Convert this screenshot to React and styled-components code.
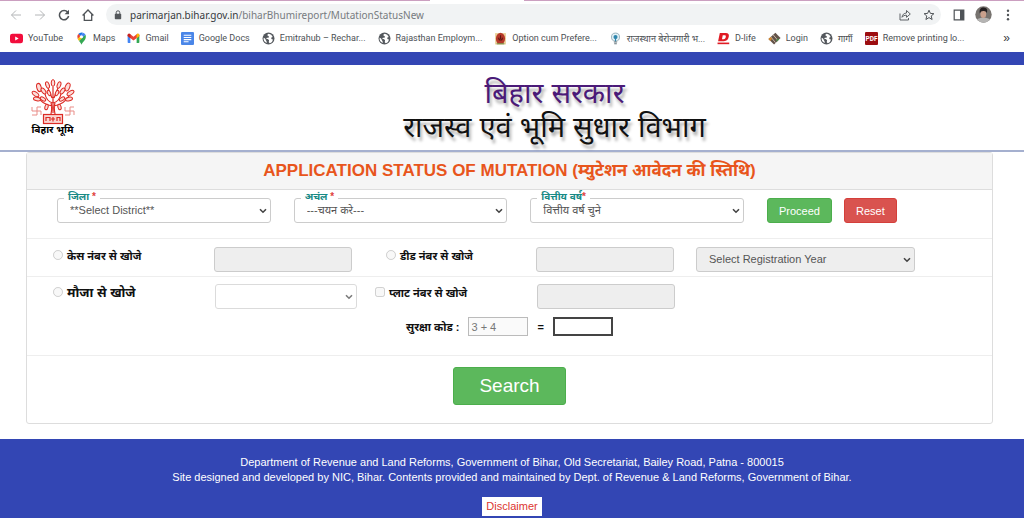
import React, { useState } from "react";
import styled, { createGlobalStyle } from "styled-components";

const GlobalStyle = createGlobalStyle`
  * {
    box-sizing: border-box;
  }

  body {
    margin: 0;
    background: #fff;
    font-family: "Liberation Sans", "Noto Sans", sans-serif;
    font-size: 11px;
    color: #333;
  }
`;

const YouTubeIcon = () => (
  <Icon viewBox="0 0 12 12">
    <rect x="0" y="1.6" width="12" height="8.8" rx="2.2" fill="#f20d3c" />
    <path d="M4.8 4.1 8 6 4.8 7.9z" fill="#fff" />
  </Icon>
);

const MapsIcon = () => (
  <Icon viewBox="0 0 12 12">
    <path d="M6 .4a4 4 0 0 0-3 1.4l2.2 1.9L7.4 .7A4 4 0 0 0 6 .4z" fill="#1a73e8" />
    <path d="M3 1.8a4 4 0 0 0-.5 4.6l2.7-2.7z" fill="#ea4335" />
    <path d="M7.4 .7 4.8 3.6 7 5.6l2.7-3A4 4 0 0 0 7.4 .7z" fill="#4285f4" />
    <path d="M2.5 6.4 5 3.7a1.4 1.4 0 0 0 2 1.8L3.7 8.3z" fill="#fbbc04" />
    <path d="M9.7 2.6 3.7 8.3C5 9.7 5.5 10.5 6 11.8c.6-2.5 4-4 4-7.5a4 4 0 0 0-.3-1.7z" fill="#34a853" />
    <circle cx="6" cy="4.4" r="1.4" fill="#fff" />
  </Icon>
);

const GmailIcon = () => (
  <Icon viewBox="0 0 12 12">
    <path d="M.6 3v6.5c0 .4.3.7.7.7h1.8V5.2z" fill="#4285f4" />
    <path d="M11.4 3v6.5c0 .4-.3.7-.7.7H8.9V5.2z" fill="#34a853" />
    <path d="M.6 3c0-1.3 1.3-1.7 2.2-1.1L6 4.3l3.2-2.4c.9-.6 2.2-.2 2.2 1.1v.8L6 7.8.6 3.8z" fill="#ea4335" />
    <path d="M8.9 2.1c1-.8 2.5-.3 2.5.9v.8L8.9 5.7z" fill="#fbbc04" />
    <path d="M.6 3c0-1.2 1.5-1.7 2.5-.9v3.6L.6 3.8z" fill="#c5221f" />
  </Icon>
);

const DocsIcon = () => (
  <Icon viewBox="0 0 12 12">
    <rect width="12" height="12" rx="1" fill="#4a86e8" />
    <path d="M2.5 3h7M2.5 5h7M2.5 7h7M2.5 9H7" stroke="#fff" strokeWidth="1" />
  </Icon>
);

const GlobeIcon = () => (
  <Icon viewBox="0 0 12 12">
    <circle cx="6" cy="6" r="5.5" fill="#54585d" />
    <path d="M6.3 1.7c-.8.5-1.5.7-1.4 1.4.1.8 1 .4 1.4 1 .3.6-.3 1.2-1.2 1.3-.8 0-1.2.2-1 .9.3.8 1.9.2 2.3 1 .4.7-.3 1.2-.1 2.2.1.5.6.9 1.1.8a4.4 4.4 0 0 0 2.9-3.5c-.9.2-1.3-.3-1.7-.9-.5-.8.5-1.3 1.3-1.4a4.4 4.4 0 0 0-3.6-2.8z" fill="#fff" />
    <path d="M1.5 5.4c.9.3 1.7 1 1.9 1.7.2.7.9 1 .9 1.8v1.2A4.5 4.5 0 0 1 1.5 5.4z" fill="#fff" />
  </Icon>
);

const EmblemIcon = () => (
  <Icon viewBox="0 0 12 12">
    <rect x="1" y="1" width="10" height="10.5" fill="#ecd29b" />
    <path d="M6 .8c2.8.5 4.2 2.7 4.2 5.2 0 2.2-1 3.8-2 4.7H3.7C2.5 9.7 1.8 8.2 1.8 6 1.8 3.5 3.2 1.3 6 .8z" fill="#b5382a" />
    <path d="M6 3v3.5M4.3 5.2c.1 3 3.4 3 3.5 0" stroke="#5e1712" strokeWidth="1" fill="none" />
    <path d="M2.5 10.9h7" stroke="#6f8b42" strokeWidth="1" />
  </Icon>
);

const BulbIcon = () => (
  <Icon viewBox="0 0 12 12">
    <circle cx="6" cy="4.7" r="3.7" fill="#e3f1f6" stroke="#8da8b4" strokeWidth=".8" />
    <circle cx="6" cy="4.7" r="1.9" fill="#2f86ad" />
    <path d="M6 5.5v3.3" stroke="#2f86ad" strokeWidth="1" />
    <path d="M4.5 9.2h3M4.8 10.8h2.4" stroke="#65757c" strokeWidth="1" />
  </Icon>
);

const DLifeIcon = () => (
  <Icon viewBox="0 0 12 12">
    <path fillRule="evenodd" d="M2.6 1h5.6c2.2 0 3.1 1.2 2.7 3.2-.5 2.7-1.9 4.3-4.5 4.3H1zm2.7 1.9-.7 3.7h1.6c1.1 0 1.6-.6 1.9-1.9.2-1.2-.1-1.8-1.1-1.8z" fill="#e01b24" />
    <path d="M.5 10.5h10.8" stroke="#e01b24" strokeWidth="1.5" />
  </Icon>
);

const LoginIcon = () => (
  <Icon viewBox="0 0 12 12">
    <path d="M.4 6.5 6.8 .6l4.8 4.9-6 6z" fill="#635349" />
    <path d="M2.5 4.5 7 9.9M4.7 2.5l4.4 5.2" stroke="#d8c9b5" strokeWidth=".8" />
    <path d="M.4 6.5 2.5 4.5l1.4 1.7-1.8 2z" fill="#d4872d" />
    <path d="m7.5 7.5 1.7-1.7 1 1.2-2 2z" fill="#4d8a4a" />
  </Icon>
);

const PdfIcon = () => (
  <Icon viewBox="0 0 12 12">
    <rect width="12" height="12" rx="1" fill="#9c0d10" />
    <text x="6" y="8.2" textAnchor="middle" fontSize="6" fontWeight="700" fill="#fff">
      PDF
    </text>
  </Icon>
);

const BiharTree = () => (
  <svg width="44" height="46" viewBox="0 0 44 46" fill="none" stroke="#dc2a24" strokeWidth="1.2">
    <path d="M20 35c1-5 1-8 0-11M24 35c-1-5-1-8 0-11M22 34V8M22 24c-4-1-7-4-8-9M22 24c4-1 7-4 8-9M21 27C14 26 9 22 6 17M23 27c7-1 12-5 15-10M21 19l-4-10M23 19l4-10" />
    <g strokeWidth="1" fill="#fbdcd8">
      <ellipse cx="22" cy="4" rx="1.8" ry="3.4" />
      <ellipse cx="16.5" cy="6" rx="1.7" ry="3.3" transform="rotate(-20 16.5 6)" />
      <ellipse cx="28" cy="6" rx="1.7" ry="3.3" transform="rotate(20 28 6)" />
      <ellipse cx="8" cy="8.5" rx="2.2" ry="4.2" transform="rotate(-15 8 8.5)" />
      <ellipse cx="36.5" cy="8" rx="2.2" ry="4.2" transform="rotate(22 36.5 8)" />
      <ellipse cx="12.5" cy="12" rx="1.8" ry="3.4" transform="rotate(-35 12.5 12)" />
      <ellipse cx="31.5" cy="12" rx="1.8" ry="3.4" transform="rotate(35 31.5 12)" />
      <ellipse cx="4.5" cy="15" rx="1.9" ry="3.8" transform="rotate(-55 4.5 15)" />
      <ellipse cx="39.5" cy="14" rx="1.9" ry="3.8" transform="rotate(60 39.5 14)" />
      <ellipse cx="6" cy="20" rx="1.8" ry="3.6" transform="rotate(-80 6 20)" />
      <ellipse cx="38" cy="20" rx="1.8" ry="3.6" transform="rotate(75 38 20)" />
      <ellipse cx="12" cy="20" rx="1.6" ry="3" transform="rotate(-60 12 20)" />
      <ellipse cx="31" cy="20" rx="1.6" ry="3" transform="rotate(60 31 20)" />
      <ellipse cx="18" cy="14" rx="1.5" ry="2.8" transform="rotate(-25 18 14)" />
      <ellipse cx="26" cy="14" rx="1.5" ry="2.8" transform="rotate(25 26 14)" />
      <ellipse cx="15.5" cy="28" rx="1.6" ry="2.8" transform="rotate(15 15.5 28)" />
      <ellipse cx="28.5" cy="28" rx="1.6" ry="2.8" transform="rotate(-15 28.5 28)" />
    </g>
    <g stroke="#e98d88" strokeWidth="1">
      <path d="M1 28v4h9v4M10 28H6v8H1M34 28v4h9v4M43 28h-4v8h-5" />
    </g>
    <rect x="12.5" y="35.5" width="19" height="9" fill="#f9d5d1" />
    <path d="M15 42v-3.5h4V42m3-4v4.5m-2-2.5h4m2 2v-3.5h3V42" />
  </svg>
);

const bookmarks = [
  { label: "YouTube", icon: YouTubeIcon },
  { label: "Maps", icon: MapsIcon },
  { label: "Gmail", icon: GmailIcon },
  { label: "Google Docs", icon: DocsIcon },
  { label: "Emitrahub – Rechar...", icon: GlobeIcon },
  { label: "Rajasthan Employm...", icon: GlobeIcon },
  { label: "Option cum Prefere...", icon: EmblemIcon },
  { label: "राजस्थान बेरोजगारी भ...", icon: BulbIcon },
  { label: "D-life", icon: DLifeIcon },
  { label: "Login", icon: LoginIcon },
  { label: "गार्गी", icon: GlobeIcon },
  { label: "Remove printing lo...", icon: PdfIcon },
];

function BrowserBar() {
  return (
    <Browser>
      <TabStrip>
        <ActiveTab />
      </TabStrip>
      <Toolbar>
        <NavButton type="button" aria-label="Back" $muted>
          <svg width="12" height="12" viewBox="0 0 12 12">
            <path d="M11 6H1.5M6 1.5 1.5 6 6 10.5" />
          </svg>
        </NavButton>
        <NavButton type="button" aria-label="Forward" $muted>
          <svg width="12" height="12" viewBox="0 0 12 12">
            <path d="M1 6h9.5M6 1.5 10.5 6 6 10.5" />
          </svg>
        </NavButton>
        <NavButton type="button" aria-label="Reload">
          <svg width="12" height="12" viewBox="0 0 12 12">
            <path d="M9.7 3.3A4.6 4.6 0 1 0 10.6 7" strokeWidth="1.5" />
            <path d="M11 .8v4.4H6.6z" fill="#4f5357" stroke="none" />
          </svg>
        </NavButton>
        <NavButton type="button" aria-label="Home">
          <svg width="12" height="12" viewBox="0 0 12 12">
            <path d="M.6 6.5 6 1l5.4 5.5M2.3 5.5v5.8h7.4V5.5" strokeWidth="1.3" />
          </svg>
        </NavButton>
        <AddressBar>
          <svg width="8" height="10" viewBox="0 0 8 10" fill="none">
            <rect x=".8" y="3.8" width="6.4" height="5.4" rx=".7" fill="#54585c" />
            <path d="M2.2 4V2.6a1.8 1.8 0 0 1 3.6 0V4" stroke="#54585c" strokeWidth="1" />
          </svg>
          <Url>
            <b>parimarjan.bihar.gov.in</b>/biharBhumireport/MutationStatusNew
          </Url>
          <ButtonGroup $gap={12}>
            <NavButton type="button" aria-label="Share">
              <svg width="12" height="12" viewBox="0 0 12 12">
                <path d="M1 4.5V11h8.5V9M3 8.3C3.3 5.5 5 4.2 7.5 4V1.5L11.3 5 7.5 8.3V6.2C5.5 6.2 4 6.8 3 8.3z" strokeWidth=".9" />
              </svg>
            </NavButton>
            <NavButton type="button" aria-label="Bookmark this page">
              <svg width="12" height="12" viewBox="0 0 12 12">
                <path d="m6 1.2 1.4 3.2 3.5.3-2.7 2.3.9 3.5L6 8.6l-3.1 1.9.9-3.5L1.1 4.7l3.5-.3z" strokeWidth="1" />
              </svg>
            </NavButton>
          </ButtonGroup>
        </AddressBar>
        <ButtonGroup $gap={10}>
          <NavButton type="button" aria-label="Side panel">
            <svg width="12" height="12" viewBox="0 0 12 12">
              <path d="M1.2 1.2h9.6v9.6H1.2z" strokeWidth="1.2" />
              <path d="M7 1h4v10H7z" fill="#4f5357" stroke="none" />
            </svg>
          </NavButton>
          <NavButton type="button" aria-label="Profile">
            <svg width="17" height="17" viewBox="0 0 17 17">
              <g stroke="none">
                <circle cx="8.5" cy="8.5" r="8.2" fill="#77736f" />
                <path d="M2 13.5c2-2.5 11-2.5 13 0a8.2 8.2 0 0 1-13 0z" fill="#b5b4b3" />
                <ellipse cx="8.3" cy="8" rx="2.9" ry="4" fill="#c9a08c" />
                <path d="M4.8 7.5C4 3.5 6 1.5 8.8 1.6c3 .1 4 2.4 3 5.4-.6-1.5-1.5-2.2-3.5-2-1.8 0-2.7.8-3.5 2.5z" fill="#231f20" />
              </g>
            </svg>
          </NavButton>
          <NavButton type="button" aria-label="Menu">
            <svg width="12" height="12" viewBox="0 0 12 12">
              <g fill="#4f5357" stroke="none">
                <circle cx="6" cy="1.8" r="1.2" />
                <circle cx="6" cy="6" r="1.2" />
                <circle cx="6" cy="10.2" r="1.2" />
              </g>
            </svg>
          </NavButton>
        </ButtonGroup>
      </Toolbar>
      <Bookmarks>
        {bookmarks.map(({ label, icon: BookmarkIcon }) => (
          <Bookmark key={label} href="#">
            <BookmarkIcon />
            {label}
          </Bookmark>
        ))}
        <MoreButton type="button" aria-label="More bookmarks">
          »
        </MoreButton>
      </Bookmarks>
    </Browser>
  );
}

function App() {
  const [mode, setMode] = useState("");
  const [code, setCode] = useState("");

  return (
    <>
      <GlobalStyle />
      <BrowserBar />
      <TopStripe />
      <Header>
        <Logo>
          <BiharTree />
          <LogoText>बिहार भूमि</LogoText>
        </Logo>
        <Titles>
          <Title $color="#4b1a78">बिहार सरकार</Title>
          <Title $color="#111">राजस्व एवं भूमि सुधार विभाग</Title>
        </Titles>
      </Header>

      <Panel>
        <PanelHeading>APPLICATION STATUS OF MUTATION (म्युटेशन आवेदन की स्तिथि)</PanelHeading>

        <FilterRow>
          <Field>
            <FieldLabel htmlFor="district">
              जिला <i>*</i>
            </FieldLabel>
            <Select id="district">
              <option>**Select District**</option>
            </Select>
          </Field>
          <Field>
            <FieldLabel htmlFor="circle">
              अचंल <i>*</i>
            </FieldLabel>
            <Select id="circle">
              <option>---चयन करे---</option>
            </Select>
          </Field>
          <Field>
            <FieldLabel htmlFor="year">
              वित्तीय वर्ष<i>*</i>
            </FieldLabel>
            <Select id="year">
              <option>वित्तीय वर्ष चुने</option>
            </Select>
          </Field>
          <Actions>
            <Button type="button" $color="#5cb85c" $border="#4cae4c">
              Proceed
            </Button>
            <Button type="button" $color="#d9534f" $border="#d43f3a">
              Reset
            </Button>
          </Actions>
        </FilterRow>

        <CaseRow>
          <Choice>
            <input
              type="radio"
              name="mode"
              checked={mode === "case"}
              onChange={() => setMode("case")}
              disabled
            />
            केस नंबर से खोजे
          </Choice>
          <TextBox aria-label="केस नंबर" disabled />
          <Choice>
            <input
              type="radio"
              name="mode"
              checked={mode === "deed"}
              onChange={() => setMode("deed")}
              disabled
            />
            डीड नंबर से खोजे
          </Choice>
          <TextBox aria-label="डीड नंबर" disabled />
          <Select aria-label="Registration Year" $grey disabled>
            <option>Select Registration Year</option>
          </Select>
        </CaseRow>

        <MaujaRow>
          <Choice $large>
            <input
              type="radio"
              name="mode"
              checked={mode === "mauja"}
              onChange={() => setMode("mauja")}
              disabled
            />
            मौजा से खोजे
          </Choice>
          <Select aria-label="मौजा" $faded disabled />
          <Choice>
            <input type="checkbox" disabled />
            प्लाट नंबर से खोजे
          </Choice>
          <TextBox aria-label="प्लाट नंबर" disabled />
        </MaujaRow>

        <CodeRow>
          <label htmlFor="code">सुरक्षा कोड :</label>
          <CodeBox aria-label="3 + 4" value="3 + 4" disabled />
          <span>=</span>
          <CodeBox id="code" value={code} onChange={(e) => setCode(e.target.value)} />
        </CodeRow>

        <SearchRow>
          <SearchButton type="button">Search</SearchButton>
        </SearchRow>
      </Panel>

      <Footer>
        <p>
          Department of Revenue and Land Reforms, Government of Bihar, Old Secretariat, Bailey Road,
          Patna - 800015
        </p>
        <p>
          Site designed and developed by NIC, Bihar. Contents provided and maintained by Dept. of
          Revenue &amp; Land Reforms, Government of Bihar.
        </p>
        <Disclaimer href="#">Disclaimer</Disclaimer>
      </Footer>
    </>
  );
}

const chevron = `url("data:image/svg+xml,%3Csvg xmlns='http://www.w3.org/2000/svg' width='8' height='6' viewBox='0 0 8 6'%3E%3Cpath d='M1 1.2 4 4.2 7 1.2' fill='none' stroke='%23444' stroke-width='1.6'/%3E%3C/svg%3E")`;

const Icon = styled.svg`
  width: 13px;
  height: 13px;
  flex: none;
`;

const Browser = styled.div`
  font-family: "Noto Sans", "Open Sans", sans-serif;
  color: #4c5054;
`;

const TabStrip = styled.div`
  display: flex;
  height: 1px;
  padding-left: 42%;
  background: #cb9fc0;
`;

const ActiveTab = styled.div`
  width: 94px;
  background: #fff;
`;

const Toolbar = styled.div`
  display: flex;
  align-items: center;
  gap: 12px;
  height: 27px;
  padding: 0 10px;
`;

const ButtonGroup = styled.div`
  display: flex;
  align-items: center;
  gap: ${(props) => props.$gap}px;
`;

const NavButton = styled.button`
  display: flex;
  padding: 0;
  border: 0;
  background: none;

  svg {
    fill: none;
    stroke: ${(props) => (props.$muted ? "#b4b6b8" : "#4f5357")};
  }
`;

const AddressBar = styled.div`
  flex: 1;
  display: flex;
  align-items: center;
  gap: 8px;
  height: 21px;
  padding: 0 6px 0 8px;
  border-radius: 11px;
  background: #f1f3f4;
`;

const Url = styled.span`
  flex: 1;
  font-size: 10px;
  color: #777b80;

  b {
    font-weight: 400;
    color: #36393d;
  }
`;

const Bookmarks = styled.nav`
  display: flex;
  align-items: center;
  gap: 12px;
  height: 24px;
  padding: 0 14px 4px 10px;
  font-family: Roboto, "Noto Sans", sans-serif;
`;

const Bookmark = styled.a`
  display: flex;
  align-items: center;
  gap: 5px;
  font-size: 9px;
  white-space: nowrap;
  color: inherit;
  text-decoration: none;
`;

const MoreButton = styled.button`
  margin-left: auto;
  padding: 0;
  border: 0;
  background: none;
  font-size: 12px;
  line-height: 12px;
  color: #3c4043;
`;

const TopStripe = styled.div`
  height: 13px;
  background: #3346b4;
`;

const Header = styled.header`
  display: flex;
  height: 87px;
  border-bottom: 2px solid #a5b0cf;
`;

const Logo = styled.div`
  display: flex;
  flex-direction: column;
  align-items: center;
  width: 85px;
  padding: 14px 0 0 20px;
`;

const LogoText = styled.span`
  font-size: 10px;
  line-height: 10px;
  font-weight: 700;
  white-space: nowrap;
  color: #000;
`;

const Titles = styled.div`
  flex: 1;
  padding-top: 11px;
  text-align: center;
`;

const Title = styled.h1`
  margin: 0;
  font-size: 29px;
  line-height: 34px;
  font-weight: 400;
  color: ${(props) => props.$color};
  text-shadow: 2px 4px 3px rgba(0, 0, 0, 0.3);
`;

const Panel = styled.main`
  margin: 0 31px 15px 26px;
  border: 1px solid #ddd;
  border-radius: 3px;
`;

const PanelHeading = styled.h2`
  margin: 0;
  height: 37px;
  border-bottom: 1px solid #ddd;
  background: #f5f5f5;
  font-size: 17px;
  line-height: 36px;
  text-align: center;
  color: #e8551c;
`;

const FilterRow = styled.div`
  display: grid;
  grid-template-columns: repeat(3, 1fr) 225px;
  gap: 23px;
  padding: 8px 0 15px 30px;
  border-bottom: 1px solid #eee;
`;

const Field = styled.div`
  position: relative;
`;

const FieldLabel = styled.label`
  position: absolute;
  top: -7px;
  left: 7px;
  padding: 0 4px;
  background: #fff;
  font-size: 10px;
  line-height: 12px;
  font-weight: 700;
  color: #178a85;

  i {
    font-style: normal;
    color: #e0413c;
  }
`;

const Select = styled.select`
  appearance: none;
  width: 100%;
  height: 25px;
  padding: 0 16px 0 12px;
  border: 1px solid #ccc;
  border-radius: 3px;
  background: ${(props) => (props.$grey ? "#eee" : "#fff")} ${chevron} no-repeat right 3px center;
  font-family: inherit;
  font-size: 11px;
  line-height: 23px;
  color: #555;
  opacity: ${(props) => (props.$faded ? 0.7 : 1)};
`;

const TextBox = styled.input`
  width: 138px;
  height: 25px;
  padding: 0 8px;
  border: 1px solid #ccc;
  border-radius: 3px;
  background: #eee;
`;

const Actions = styled.div`
  display: flex;
  gap: 12px;
`;

const Button = styled.button`
  height: 25px;
  padding: 0 11px;
  border: 1px solid ${(props) => props.$border};
  border-radius: 3px;
  background: ${(props) => props.$color};
  font-family: inherit;
  font-size: 11px;
  color: #fff;
`;

const CaseRow = styled.div`
  display: grid;
  grid-template-columns: 161fr 172fr 150fr 160fr 219fr 77fr;
  padding: 8px 0 4px 26px;
  border-bottom: 1px solid #eee;
`;

const MaujaRow = styled.div`
  display: grid;
  grid-template-columns: 162fr 160fr 162fr 455fr;
  padding: 7px 0 0 26px;

  select {
    width: 142px;
  }
`;

const Choice = styled.label`
  display: flex;
  align-items: center;
  gap: 4px;
  height: 16px;
  font-size: ${(props) => (props.$large ? 13 : 11)}px;
  font-weight: 700;
  white-space: nowrap;
  color: #111;

  input {
    width: 10px;
    height: 10px;
    margin: 0;
  }
`;

const CodeRow = styled.div`
  display: flex;
  justify-content: center;
  align-items: center;
  gap: 9px;
  padding: 8px 0 19px;
  border-bottom: 1px solid #eee;
  font-weight: 700;
  color: #111;
`;

const CodeBox = styled.input`
  width: 60px;
  height: 19px;
  padding: 0 2px;
  border: 2px solid #444;
  border-radius: 0;
  background: #fff;
  font-family: inherit;
  font-size: 11px;

  &:disabled {
    border: 1px solid #bbb;
    background: #fafafa;
    color: #777;
  }
`;

const SearchRow = styled.div`
  padding: 11px 0 18px;
  text-align: center;
`;

const SearchButton = styled.button`
  height: 38px;
  padding: 0 25px;
  border: 1px solid #4cae4c;
  border-radius: 3px;
  background: #5cb85c;
  font-family: inherit;
  font-size: 19px;
  color: #fff;
`;

const Footer = styled.footer`
  padding: 16px 0 2px;
  background: #3346b4;
  text-align: center;
  line-height: 15px;
  color: #fff;

  p {
    margin: 0;
  }
`;

const Disclaimer = styled.a`
  display: inline-block;
  margin-top: 12px;
  padding: 2px 4px;
  background: #fff;
  color: #dc3530;
  text-decoration: none;
`;

export default App;
